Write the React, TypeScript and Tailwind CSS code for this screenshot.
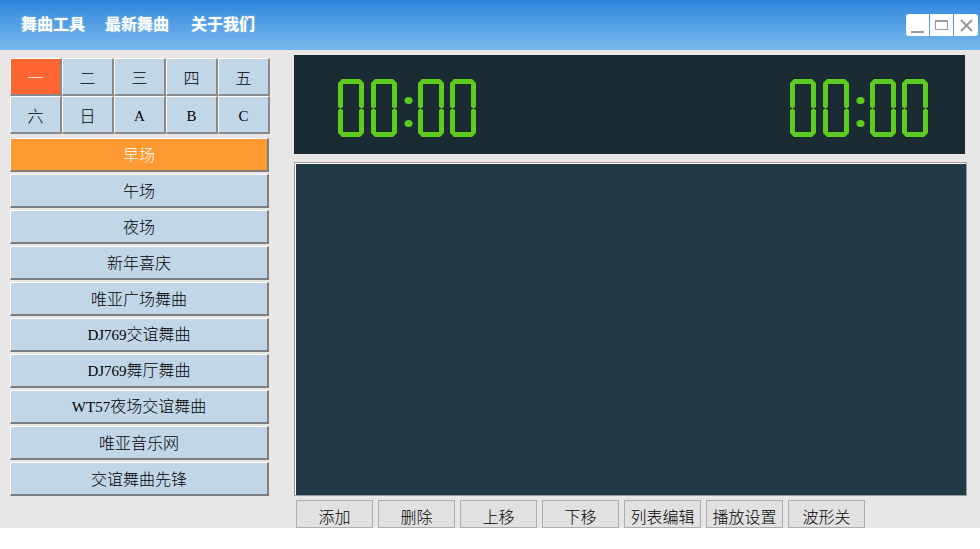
const grid = ['一', '二', '三', '四', '五', '六', '日', 'A', 'B', 'C']
const lists = [
  '早场',
  '午场',
  '夜场',
  '新年喜庆',
  '唯亚广场舞曲',
  'DJ769交谊舞曲',
  'DJ769舞厅舞曲',
  'WT57夜场交谊舞曲',
  '唯亚音乐网',
  '交谊舞曲先锋',
]
const tools = ['添加', '删除', '上移', '下移', '列表编辑', '播放设置', '波形关']

// latin bits use a serif face, like the old bitmap font
function Label({ text }: { text: string }) {
  return (
    <span className="leading-[20px]">
      {text.split(/([A-Za-z0-9]+)/).map((part, i) =>
        /^[A-Za-z0-9]+$/.test(part) ? (
          <span key={i} className="font-['Liberation_Serif',serif] text-[15px]">
            {part}
          </span>
        ) : (
          part
        )
      )}
    </span>
  )
}

function Digit() {
  return (
    <svg width="26" height="58" viewBox="0 0 26 58">
      <path
        d="M0 28V4L4 0H22L26 4V28L23.5 29.5L21 28V5H5V28L2.5 29.5Z M0 31L2.5 29.5L5 31V53H21V31L23.5 29.5L26 31V54L22 58H4L0 54Z"
        fill="#5dcb20"
      />
    </svg>
  )
}

function Colon() {
  return (
    <svg width="9" height="58" viewBox="0 0 9 58">
      <ellipse cx="4.5" cy="21.5" rx="4" ry="3.5" fill="#5dcb20" />
      <ellipse cx="4.5" cy="44.5" rx="4" ry="3.5" fill="#5dcb20" />
    </svg>
  )
}

function Clock() {
  return (
    <div className="flex items-center">
      <Digit />
      <div className="ml-[7px]"><Digit /></div>
      <div className="ml-[7px]"><Colon /></div>
      <div className="ml-[5px]"><Digit /></div>
      <div className="ml-[6px]"><Digit /></div>
    </div>
  )
}

export default function App() {
  return (
    <div className="w-[980px] h-[549px] bg-white overflow-hidden font-['Noto_Sans_CJK_SC',sans-serif]">
      {/* Title bar */}
      <div className="h-[50px] bg-linear-to-b from-[#2c86dc] to-[#7ab9ec] flex items-start">
        <div className="flex gap-[20px] ml-[21px] mt-[11px] text-white font-bold text-[16px] leading-[24px] [text-shadow:0_0_2px_rgba(255,255,255,0.5)]">
          <span>舞曲工具</span>
          <span>最新舞曲</span>
          <span className="ml-[2px]">关于我们</span>
        </div>
        <div className="ml-auto mt-[14px] mr-[2px] flex gap-px">
          <div className="w-[23px] h-[22px] bg-white rounded-l-[3px] flex items-end justify-center pb-[3px]">
            <div className="w-[13px] h-[2px] bg-[#9a9a9a]" />
          </div>
          <div className="w-[23px] h-[22px] bg-white flex items-center justify-center">
            <div className="w-[13px] h-[10px] border border-t-2 border-[#9a9a9a]" />
          </div>
          <div className="w-[24px] h-[22px] bg-white rounded-r-[3px] flex items-center justify-center">
            <svg width="13" height="13" viewBox="0 0 13 13">
              <path d="M1 1L12 12M12 1L1 12" stroke="#9a9a9a" strokeWidth="2" />
            </svg>
          </div>
        </div>
      </div>

      {/* Body */}
      <div className="h-[478px] bg-[#e8e6e6] flex overflow-hidden">
        {/* Left column */}
        <div className="pl-[10px] pt-[8px] w-[270px] shrink-0">
          <div className="grid grid-cols-5 w-[260px]">
            {grid.map((g, i) => (
              <div
                key={g}
                className={`h-[38px] flex items-center justify-center text-[16px] font-light border-t border-l border-t-white border-l-white border-b-2 border-r-2 border-b-[#8a8a8a] border-r-[#8a8a8a] ${
                  i === 0 ? 'bg-[#ff6531] text-white' : 'bg-[#c1d7e8] text-black'
                }`}
              >
                <Label text={g} />
              </div>
            ))}
          </div>
          <div className="mt-[4px] flex flex-col gap-[2px]">
            {lists.map((l, i) => (
              <div
                key={l}
                className={`w-[259px] h-[34px] flex items-center justify-center pb-[2px] text-[16px] font-light border-t border-l border-t-white border-l-white border-b-2 border-r-2 border-b-[#7f7f7f] border-r-[#7f7f7f] ${
                  i === 0 ? 'bg-[#ff9a33] text-white' : 'bg-[#c1d7e8] text-black'
                }`}
              >
                <Label text={l} />
              </div>
            ))}
          </div>
        </div>

        {/* Right column */}
        <div className="ml-[24px] pt-[5px] flex flex-col">
          <div className="w-[671px] h-[100px] bg-[#1b2b33] flex items-start justify-between pl-[44px] pr-[37px] pt-[24px]">
            <Clock />
            <Clock />
          </div>
          <div className="mt-[8px] w-[673px] h-[338px] bg-[#213a45] border border-[#9c9c9c] shadow-[inset_1px_1px_0_#ffffff]" />
          <div className="mt-[4px] ml-[2px] flex gap-[5px]">
            {tools.map((t) => (
              <div
                key={t}
                className="w-[77px] h-[28px] bg-[#e1e1e1] border border-[#adadad] flex items-start justify-center pt-[4px] text-[16px] font-light text-black leading-[22px]"
              >
                {t}
              </div>
            ))}
          </div>
        </div>
      </div>
    </div>
  )
}
